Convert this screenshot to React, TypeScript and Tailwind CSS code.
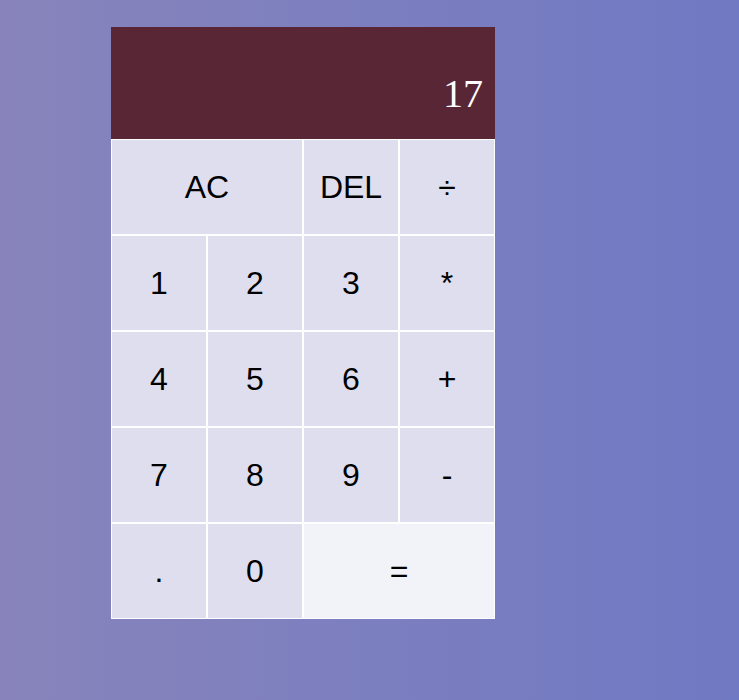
import React from "react";

const btn =
  "border border-white bg-[#dedeee] text-[32px] leading-[normal] text-black flex items-center justify-center [font-family:'Liberation_Sans',Arial,sans-serif]";

export default function App() {
  const keys: { label: string; span?: boolean; eq?: boolean }[] = [
    { label: "AC", span: true },
    { label: "DEL" },
    { label: "÷" },
    { label: "1" },
    { label: "2" },
    { label: "3" },
    { label: "*" },
    { label: "4" },
    { label: "5" },
    { label: "6" },
    { label: "+" },
    { label: "7" },
    { label: "8" },
    { label: "9" },
    { label: "-" },
    { label: "." },
    { label: "0" },
    { label: "=", span: true, eq: true },
  ];
  return (
    <div className="min-h-[700px] w-full bg-gradient-to-r from-[#8884bb] to-[#7079c3] pt-[27px] pl-[111px]">
      <div className="grid w-[384px] grid-cols-[repeat(4,96px)] grid-rows-[112px] auto-rows-[96px]">
        <div className="col-span-4 h-[112px] bg-[#582634] p-3 flex flex-col items-end justify-around text-white [font-family:'Liberation_Serif','Times_New_Roman',serif]">
          <div className="text-[24px] leading-[normal]"></div>
          <div className="text-[40px] leading-[normal]">17</div>
        </div>
        {keys.map((k) => (
          <div
            key={k.label}
            className={
              btn +
              (k.span ? " col-span-2" : "") +
              (k.eq ? " !bg-[#f2f3f8]" : "")
            }
          >
            {k.label}
          </div>
        ))}
      </div>
    </div>
  );
}
